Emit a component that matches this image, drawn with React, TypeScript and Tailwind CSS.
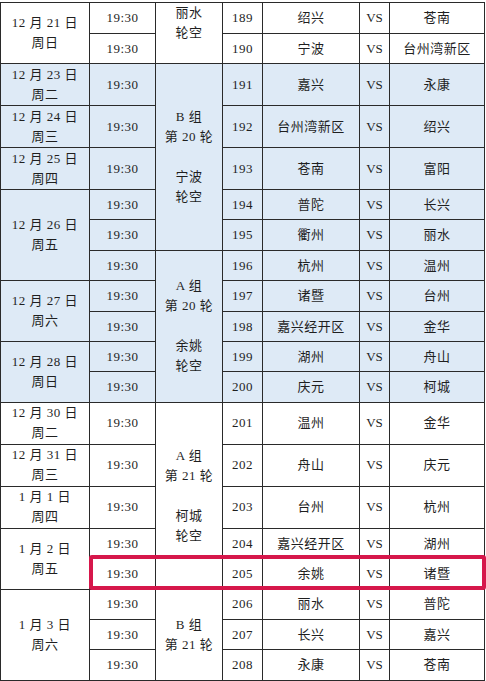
import React from "react";

type Match = { no: number; home: string; away: string };

const MATCHES: Match[] = [
  { no: 189, home: "绍兴", away: "苍南" },
  { no: 190, home: "宁波", away: "台州湾新区" },
  { no: 191, home: "嘉兴", away: "永康" },
  { no: 192, home: "台州湾新区", away: "绍兴" },
  { no: 193, home: "苍南", away: "富阳" },
  { no: 194, home: "普陀", away: "长兴" },
  { no: 195, home: "衢州", away: "丽水" },
  { no: 196, home: "杭州", away: "温州" },
  { no: 197, home: "诸暨", away: "台州" },
  { no: 198, home: "嘉兴经开区", away: "金华" },
  { no: 199, home: "湖州", away: "舟山" },
  { no: 200, home: "庆元", away: "柯城" },
  { no: 201, home: "温州", away: "金华" },
  { no: 202, home: "舟山", away: "庆元" },
  { no: 203, home: "台州", away: "杭州" },
  { no: 204, home: "嘉兴经开区", away: "湖州" },
  { no: 205, home: "余姚", away: "诸暨" },
  { no: 206, home: "丽水", away: "普陀" },
  { no: 207, home: "长兴", away: "嘉兴" },
  { no: 208, home: "永康", away: "苍南" },
];

// date cells keyed by the first match number they cover
const DATES: Record<number, { day: string; week: string; span: number }> = {
  189: { day: "12 月 21 日", week: "周日", span: 2 },
  191: { day: "12 月 23 日", week: "周二", span: 1 },
  192: { day: "12 月 24 日", week: "周三", span: 1 },
  193: { day: "12 月 25 日", week: "周四", span: 1 },
  194: { day: "12 月 26 日", week: "周五", span: 3 },
  197: { day: "12 月 27 日", week: "周六", span: 2 },
  199: { day: "12 月 28 日", week: "周日", span: 2 },
  201: { day: "12 月 30 日", week: "周二", span: 1 },
  202: { day: "12 月 31 日", week: "周三", span: 1 },
  203: { day: "1 月 1 日", week: "周四", span: 1 },
  204: { day: "1 月 2 日", week: "周五", span: 2 },
  206: { day: "1 月 3 日", week: "周六", span: 3 },
};

const ROUNDS: Record<number, { lines: string[]; span: number }> = {
  189: { lines: ["丽水", "轮空", ""], span: 2 },
  191: { lines: ["B 组", "第 20 轮", "", "宁波", "轮空"], span: 5 },
  196: { lines: ["A 组", "第 20 轮", "", "余姚", "轮空"], span: 5 },
  201: { lines: ["A 组", "第 21 轮", "", "柯城", "轮空"], span: 5 },
  206: { lines: ["B 组", "第 21 轮"], span: 3 },
};

const TALL = [191, 192, 193, 201, 202, 203];
const isBlue = (no: number) => no >= 191 && no <= 200;

const cell = "border border-[#2a2a2a] p-0 text-center align-middle";

export default function App() {
  return (
    <div
      className="relative h-[681px] w-[486px] overflow-hidden bg-white text-[13px] tracking-[0.5px] text-[#1f1f1f]"
      style={{ fontFamily: '"Liberation Serif", "Noto Sans CJK SC", serif' }}
    >
      <table className="mt-[2px] w-[484px] table-fixed border-collapse">
        <colgroup>
          <col className="w-[89px]" />
          <col className="w-[66px]" />
          <col className="w-[67px]" />
          <col className="w-[40px]" />
          <col className="w-[97px]" />
          <col className="w-[30px]" />
          <col className="w-[95px]" />
        </colgroup>
        <tbody>
          {MATCHES.map((m) => {
            const date = DATES[m.no];
            const round = ROUNDS[m.no];
            const bg = isBlue(m.no) ? "bg-[#deeaf6]" : "bg-white";
            return (
              <tr
                key={m.no}
                className={TALL.includes(m.no) ? "h-[42px]" : "h-[30.4px]"}
              >
                {date && (
                  <td rowSpan={date.span} className={`${cell} ${bg} leading-[20px]`}>
                    <div>{date.day}</div>
                    <div>{date.week}</div>
                  </td>
                )}
                <td className={`${cell} ${bg}`}>19:30</td>
                {round && (
                  <td rowSpan={round.span} className={`${cell} ${bg} leading-[20px]`}>
                    {round.lines.map((l, i) => (
                      <div key={i} className="h-[20px]">
                        {l}
                      </div>
                    ))}
                  </td>
                )}
                <td className={`${cell} ${bg}`}>{m.no}</td>
                <td className={`${cell} ${bg}`}>{m.home}</td>
                <td className={`${cell} ${bg} tracking-normal`}>VS</td>
                <td className={`${cell} ${bg}`}>{m.away}</td>
              </tr>
            );
          })}
        </tbody>
      </table>
      {/* highlight on match 205 */}
      <div className="absolute left-[89px] top-[555px] h-[35px] w-[397px] rounded-[3px] border-4 border-[#d6174b]" />
    </div>
  );
}
